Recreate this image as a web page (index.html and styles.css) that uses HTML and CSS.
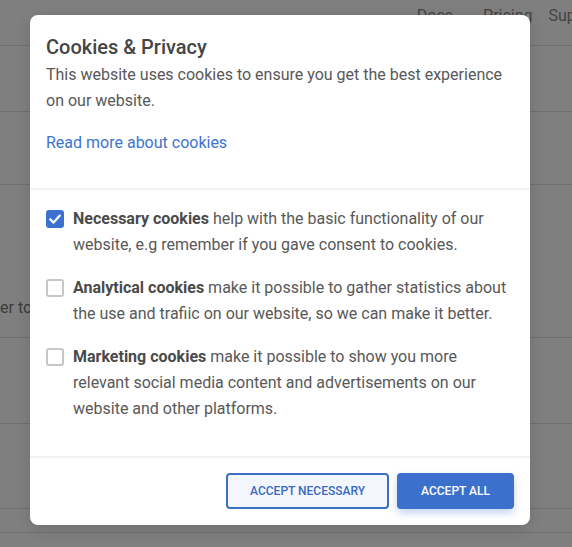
FILE: index.html
```html
<!DOCTYPE html>
<html lang="en">
<head>
<meta charset="utf-8">
<title>Cookies &amp; Privacy</title>
<link rel="stylesheet" href="styles.css">
</head>
<body>
<div class="page">
  <header class="topbar">
    <nav class="nav">
      <a class="nav-link">Docs <span class="caret">&#9662;</span></a>
      <a class="nav-link">Pricing</a>
      <a class="nav-link">Support</a>
    </nav>
  </header>
  <div class="row row-a"></div>
  <div class="row row-b"></div>
  <div class="row row-c"><p class="row-text">er to continue reading</p></div>
  <div class="row row-d"></div>
  <div class="row row-e"></div>
  <div class="row row-f"></div>
</div>

<div class="overlay">
  <div class="modal">
    <div class="modal-head">
      <h2 class="modal-title">Cookies &amp; Privacy</h2>
      <p class="modal-text">This website uses cookies to ensure you get the best experience on our website.</p>
      <a class="modal-link">Read more about cookies</a>
    </div>
    <div class="modal-body">
      <label class="opt">
        <span class="box checked"><svg viewBox="0 0 18 18" width="18" height="18"><path d="M4.2 9.3 L7.6 12.6 L13.8 5.6" fill="none" stroke="#fff" stroke-width="2.2" stroke-linecap="round" stroke-linejoin="round"/></svg></span>
        <span class="opt-text"><b>Necessary cookies</b> help with the basic functionality of our website, e.g remember if you gave consent to cookies.</span>
      </label>
      <label class="opt">
        <span class="box"></span>
        <span class="opt-text"><b>Analytical cookies</b> make it possible to gather statistics about the use and trafiic on our website, so we can make it better.</span>
      </label>
      <label class="opt">
        <span class="box"></span>
        <span class="opt-text"><b>Marketing cookies</b> make it possible to show you more relevant social media content and advertisements on our website and other platforms.</span>
      </label>
    </div>
    <div class="modal-foot">
      <button class="btn btn-outline">Accept necessary</button>
      <button class="btn btn-primary">Accept all</button>
    </div>
  </div>
</div>
</body>
</html>
```

FILE: styles.css
```css
* { box-sizing: border-box; }

html, body {
  margin: 0;
  padding: 0;
}

body {
  width: 572px;
  height: 547px;
  overflow: hidden;
  font-family: Roboto, "Liberation Sans", sans-serif;
  background: #ffffff;
  position: relative;
}

/* background page */
.page {
  width: 572px;
  overflow: hidden;
}

.topbar {
  height: 46px;
  border-bottom: 1px solid #dedede;
  display: flex;
  justify-content: flex-end;
  overflow: hidden;
}

.nav {
  display: flex;
  gap: 16px;
  margin-right: -33px;
  padding-top: 5px;
  flex: none;
}

.nav-link {
  font-size: 16px;
  color: #888;
  line-height: 22px;
  white-space: nowrap;
}

.caret {
  font-size: 11px;
  margin-left: 4px;
}

.row {
  border-bottom: 1px solid #dedede;
}

.row-a { height: 66px; }
.row-b { height: 73px; }
.row-c { height: 153px; overflow: hidden; }
.row-d { height: 86px; }
.row-e { height: 85px; }
.row-f { height: 24px; }

.row-text {
  margin: 0;
  padding-top: 112px;
  font-size: 16px;
  color: #777;
  line-height: 22px;
  white-space: nowrap;
}

/* overlay */
.overlay {
  position: absolute;
  inset: 0;
  background: rgba(0, 0, 0, 0.5);
  padding: 15px 0 0 30px;
}

.modal {
  width: 500px;
  background: #fff;
  border-radius: 8px;
  box-shadow: 0 4px 16px rgba(0, 0, 0, 0.12);
  color: #555;
}

.modal-head {
  padding: 20px 16px 32px;
  border-bottom: 2px solid #f2f2f2;
}

.modal-title {
  margin: 0 0 3px;
  font-size: 20px;
  line-height: 24px;
  font-weight: 500;
  color: #454545;
}

.modal-text {
  margin: 0 0 16px;
  font-size: 16px;
  line-height: 26px;
  color: #585858;
}

.modal-link {
  display: block;
  font-size: 16px;
  line-height: 26px;
  color: #3d74d1;
}

.modal-body {
  padding: 16px 16px 17px;
  border-bottom: 2px solid #f2f2f2;
}

.opt {
  display: flex;
  align-items: flex-start;
  gap: 9px;
  margin-bottom: 18px;
}

.box {
  flex: none;
  width: 18px;
  height: 18px;
  margin-top: 4px;
  border: 2px solid #c6c6c6;
  border-radius: 3px;
  display: flex;
  align-items: center;
  justify-content: center;
}

.box.checked {
  background: #3b71cf;
  border-color: #3b71cf;
}

.box svg {
  flex: none;
  margin: -2px;
}

.opt-text {
  font-size: 16px;
  line-height: 25.6px;
  color: #585858;
}

.opt-text b {
  font-weight: 700;
  color: #4a4a4a;
}

.modal-foot {
  display: flex;
  justify-content: flex-end;
  gap: 8px;
  padding: 15px 16px 16px;
}

.btn {
  height: 36px;
  padding: 0 22px;
  border-radius: 4px;
  font-family: Roboto, "Liberation Sans", sans-serif;
  font-size: 12px;
  font-weight: 500;
  text-transform: uppercase;
  cursor: pointer;
}

.btn-outline {
  background: #f3f7fd;
  border: 2px solid #3b6fc6;
  color: #3b6ac0;
}

.btn-primary {
  background: #3b71cc;
  border: 2px solid #3b71cc;
  color: #fff;
  box-shadow: 0 4px 8px rgba(59, 113, 204, 0.3);
}
```
